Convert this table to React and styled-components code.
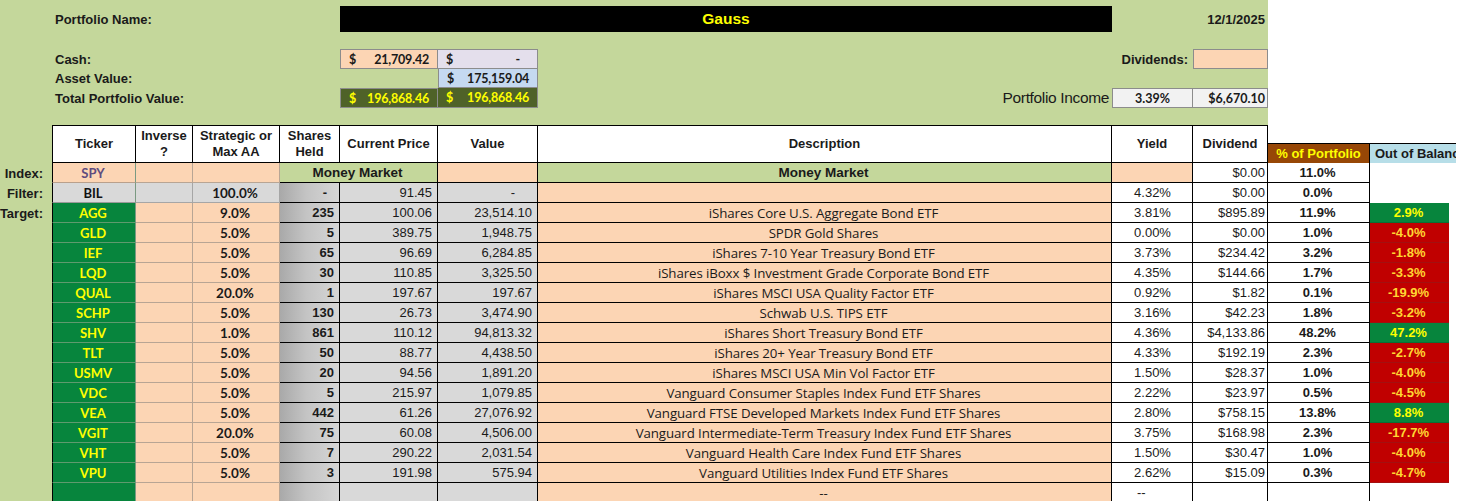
import React from "react";
import styled, { createGlobalStyle } from "styled-components";

const GlobalStyle = createGlobalStyle`
  html, body {
    margin: 0;
    padding: 0;
    background: #ffffff;
    overflow: hidden;
  }
  body {
    font-family: "Liberation Sans", Arial, sans-serif;
    color: #111;
  }
`;

const ARIAL = `"Liberation Sans", Arial, sans-serif`;
const CALIBRI = `Lato, "Open Sans", sans-serif`;
const CALIBRI_TEXT = `"Open Sans", Lato, sans-serif`;

const GREEN_BG = "#c4d79b";
const PEACH = "#fcd5b4";
const TICKER_GREEN = "#07853d";
const GRAY = "#d9d9d9";
const YELLOW = "#ffff00";

const COLS = "52px 84px 57px 87px 60px 98px 100px 574px 81px 75px 102px 86px";

const holdings = [
  { t: "AGG", s: "9.0%", sh: "235", p: "100.06", v: "23,514.10", d: "iShares Core U.S. Aggregate Bond ETF", y: "3.81%", dv: "$895.89", pct: "11.9%", ob: "2.9%" },
  { t: "GLD", s: "5.0%", sh: "5", p: "389.75", v: "1,948.75", d: "SPDR Gold Shares", y: "0.00%", dv: "$0.00", pct: "1.0%", ob: "-4.0%" },
  { t: "IEF", s: "5.0%", sh: "65", p: "96.69", v: "6,284.85", d: "iShares 7-10 Year Treasury Bond ETF", y: "3.73%", dv: "$234.42", pct: "3.2%", ob: "-1.8%" },
  { t: "LQD", s: "5.0%", sh: "30", p: "110.85", v: "3,325.50", d: "iShares iBoxx $ Investment Grade Corporate Bond ETF", y: "4.35%", dv: "$144.66", pct: "1.7%", ob: "-3.3%" },
  { t: "QUAL", s: "20.0%", sh: "1", p: "197.67", v: "197.67", d: "iShares MSCI USA Quality Factor ETF", y: "0.92%", dv: "$1.82", pct: "0.1%", ob: "-19.9%" },
  { t: "SCHP", s: "5.0%", sh: "130", p: "26.73", v: "3,474.90", d: "Schwab U.S. TIPS ETF", y: "3.16%", dv: "$42.23", pct: "1.8%", ob: "-3.2%" },
  { t: "SHV", s: "1.0%", sh: "861", p: "110.12", v: "94,813.32", d: "iShares Short Treasury Bond ETF", y: "4.36%", dv: "$4,133.86", pct: "48.2%", ob: "47.2%" },
  { t: "TLT", s: "5.0%", sh: "50", p: "88.77", v: "4,438.50", d: "iShares 20+ Year Treasury Bond ETF", y: "4.33%", dv: "$192.19", pct: "2.3%", ob: "-2.7%" },
  { t: "USMV", s: "5.0%", sh: "20", p: "94.56", v: "1,891.20", d: "iShares MSCI USA Min Vol Factor ETF", y: "1.50%", dv: "$28.37", pct: "1.0%", ob: "-4.0%" },
  { t: "VDC", s: "5.0%", sh: "5", p: "215.97", v: "1,079.85", d: "Vanguard Consumer Staples Index Fund ETF Shares", y: "2.22%", dv: "$23.97", pct: "0.5%", ob: "-4.5%" },
  { t: "VEA", s: "5.0%", sh: "442", p: "61.26", v: "27,076.92", d: "Vanguard FTSE Developed Markets Index Fund ETF Shares", y: "2.80%", dv: "$758.15", pct: "13.8%", ob: "8.8%" },
  { t: "VGIT", s: "20.0%", sh: "75", p: "60.08", v: "4,506.00", d: "Vanguard Intermediate-Term Treasury Index Fund ETF Shares", y: "3.75%", dv: "$168.98", pct: "2.3%", ob: "-17.7%" },
  { t: "VHT", s: "5.0%", sh: "7", p: "290.22", v: "2,031.54", d: "Vanguard Health Care Index Fund ETF Shares", y: "1.50%", dv: "$30.47", pct: "1.0%", ob: "-4.0%" },
  { t: "VPU", s: "5.0%", sh: "3", p: "191.98", v: "575.94", d: "Vanguard Utilities Index Fund ETF Shares", y: "2.62%", dv: "$15.09", pct: "0.3%", ob: "-4.7%" },
];

const App = () => {
  return (
    <>
      <GlobalStyle />
      <Sheet>
        <TopPanel>
          <TopLabel $row={2}>Portfolio Name:</TopLabel>
          <NameBar>Gauss</NameBar>
          <DateText>12/1/2025</DateText>

          <TopLabel $row={4}>Cash:</TopLabel>
          <MoneyBox $col={6} $row={4} $bg={PEACH}>
            <span>$</span>
            <span>21,709.42</span>
          </MoneyBox>
          <MoneyBox $col={7} $row={4} $bg="#e4dfec" $noLeft>
            <span>$</span>
            <span style={{ paddingRight: 9 }}>-</span>
          </MoneyBox>
          <SideLabel $row={4} $bold>
            Dividends:
          </SideLabel>
          <InputBox $col={10} $row={4} />

          <TopLabel $row={5}>Asset Value:</TopLabel>
          <MoneyBox $col={7} $row={5} $bg="#c5d9f1" $noTop>
            <span>$</span>
            <span>175,159.04</span>
          </MoneyBox>

          <TopLabel $row={6}>Total Portfolio Value:</TopLabel>
          <MoneyBox $col={6} $row={6} $bg="#4f6228" $color={YELLOW}>
            <span>$</span>
            <span>196,868.46</span>
          </MoneyBox>
          <MoneyBox $col={7} $row={6} $bg="#4f6228" $color={YELLOW} $noLeft $noTop>
            <span>$</span>
            <span>196,868.46</span>
          </MoneyBox>
          <SideLabel $row={6} $col={8}>
            Portfolio Income
          </SideLabel>
          <IncomeBox $col={9}>3.39%</IncomeBox>
          <IncomeBox $col={10} $right $noLeft>
            $6,670.10
          </IncomeBox>
        </TopPanel>

        <TableRow $h={38}>
          <RowLabel />
          <HeadCell $first>Ticker</HeadCell>
          <HeadCell>
            Inverse
            <br />?
          </HeadCell>
          <HeadCell>
            Strategic or
            <br />
            Max AA
          </HeadCell>
          <HeadCell>
            Shares
            <br />
            Held
          </HeadCell>
          <HeadCell>Current Price</HeadCell>
          <HeadCell>Value</HeadCell>
          <HeadCell>Description</HeadCell>
          <HeadCell>Yield</HeadCell>
          <HeadCell>Dividend</HeadCell>
          <SideHead>
            <PctHead>% of Portfolio</PctHead>
            <OutHead>Out of Balance</OutHead>
          </SideHead>
        </TableRow>

        <TableRow>
          <RowLabel>Index:</RowLabel>
          <TickerCell $variant="index">SPY</TickerCell>
          <PeachCell />
          <PeachCell />
          <MarketCell $span={2}>Money Market</MarketCell>
          <PeachCell $dark />
          <MarketCell>Money Market</MarketCell>
          <PeachCell $dark />
          <WhiteCell $align="right">$0.00</WhiteCell>
          <PctCell>11.0%</PctCell>
          <OutCell />
        </TableRow>

        <TableRow>
          <RowLabel>Filter:</RowLabel>
          <TickerCell $variant="filter">BIL</TickerCell>
          <GrayCell $soft />
          <GrayCell $soft $cal $bold>
            100.0%
          </GrayCell>
          <SharesCell $pr={12}>-</SharesCell>
          <GrayCell $align="right">91.45</GrayCell>
          <GrayCell $align="right" $pr={22}>
            -
          </GrayCell>
          <DescCell />
          <WhiteCell>4.32%</WhiteCell>
          <WhiteCell $align="right">$0.00</WhiteCell>
          <PctCell>0.0%</PctCell>
          <OutCell />
        </TableRow>

        {holdings.map((h, i) => (
          <TableRow key={h.t}>
            <RowLabel>{i === 0 ? "Target:" : ""}</RowLabel>
            <TickerCell>{h.t}</TickerCell>
            <PeachCell />
            <PeachCell $cal $bold>
              {h.s}
            </PeachCell>
            <SharesCell>{h.sh}</SharesCell>
            <GrayCell $align="right">{h.p}</GrayCell>
            <GrayCell $align="right">{h.v}</GrayCell>
            <DescCell>{h.d}</DescCell>
            <WhiteCell>{h.y}</WhiteCell>
            <WhiteCell $align="right">{h.dv}</WhiteCell>
            <PctCell>{h.pct}</PctCell>
            <OutCell $state={h.ob.startsWith("-") ? "under" : "over"}>{h.ob}</OutCell>
          </TableRow>
        ))}

        <TableRow>
          <RowLabel />
          <TickerCell />
          <PeachCell />
          <PeachCell />
          <SharesCell />
          <GrayCell />
          <GrayCell />
          <DescCell>--</DescCell>
          <WhiteCell $align="left" $pl={25}>
            --
          </WhiteCell>
          <WhiteCell />
          <PctCell />
          <OutCell />
        </TableRow>
      </Sheet>
    </>
  );
};

export default App;

const Sheet = styled.div`
  width: 1461px;
  height: 501px;
  overflow: hidden;
  display: flex;
  flex-direction: column;
`;

const TopPanel = styled.div`
  width: 1268px;
  height: 125px;
  flex-shrink: 0;
  background: ${GREEN_BG};
  display: grid;
  grid-template-columns: 52px 84px 57px 87px 60px 98px 100px 574px 81px 75px;
  grid-template-rows: 6px 26px 17px 20px 19px 20px 17px;
  font-family: ${ARIAL};
  font-size: 13px;
`;

const TopLabel = styled.div`
  grid-column: 2 / 6;
  grid-row: ${(p) => p.$row};
  display: flex;
  align-items: center;
  padding-left: 3px;
  font-weight: 700;
  color: #1a1a1a;
`;

const NameBar = styled.div`
  grid-column: 6 / 9;
  grid-row: 2;
  background: #000;
  color: ${YELLOW};
  font-weight: 700;
  font-size: 15.5px;
  display: flex;
  align-items: center;
  justify-content: center;
`;

const DateText = styled.div`
  grid-column: 9 / 11;
  grid-row: 2;
  display: flex;
  align-items: center;
  justify-content: flex-end;
  padding-right: 3px;
  font-weight: 700;
  color: #1a1a1a;
`;

const SideLabel = styled.div`
  grid-column: ${(p) => p.$col || 9};
  grid-row: ${(p) => p.$row};
  display: flex;
  align-items: center;
  justify-content: flex-end;
  padding-right: ${(p) => (p.$bold ? 5 : 3)}px;
  font-weight: ${(p) => (p.$bold ? 700 : 400)};
  font-size: ${(p) => (p.$bold ? 13 : 15.5)}px;
  letter-spacing: ${(p) => (p.$bold ? 0 : -0.35)}px;
  color: #1a1a1a;
`;

const MoneyBox = styled.div`
  grid-column: ${(p) => p.$col};
  grid-row: ${(p) => p.$row};
  background: ${(p) => p.$bg};
  color: ${(p) => p.$color || "#1a1a1a"};
  border: 1px solid #8c8c8c;
  border-left-width: ${(p) => (p.$noLeft ? 0 : 1)}px;
  border-top-width: ${(p) => (p.$noTop ? 0 : 1)}px;
  display: flex;
  align-items: center;
  justify-content: space-between;
  padding: 0 8px 0 8px;
  font-family: ${CALIBRI};
  font-weight: 700;
  font-size: 12.5px;
  letter-spacing: -0.2px;
`;

const InputBox = styled.div`
  grid-column: ${(p) => p.$col};
  grid-row: ${(p) => p.$row};
  background: ${PEACH};
  border: 1px solid #8c8c8c;
`;

const IncomeBox = styled.div`
  grid-column: ${(p) => p.$col};
  grid-row: 6;
  background: #f2f2f2;
  border: 1px solid #8c8c8c;
  border-left-width: ${(p) => (p.$noLeft ? 0 : 1)}px;
  display: flex;
  align-items: center;
  justify-content: ${(p) => (p.$right ? "flex-end" : "center")};
  padding: 0 2px;
  font-family: ${CALIBRI};
  font-weight: 700;
  font-size: 12.5px;
  color: #1a1a1a;
`;

const TableRow = styled.div`
  display: grid;
  grid-template-columns: ${COLS};
  height: ${(p) => p.$h || 20}px;
  flex-shrink: 0;
`;

const RowLabel = styled.div`
  background: ${GREEN_BG};
  display: flex;
  align-items: center;
  justify-content: flex-end;
  padding-right: 9px;
  font-family: ${ARIAL};
  font-weight: 700;
  font-size: 13px;
  color: #1a1a1a;
  white-space: nowrap;
`;

const HeadCell = styled.div`
  background: #fff;
  border-top: 1px solid #000;
  border-right: 1px solid #000;
  border-bottom: 1px solid #000;
  border-left: ${(p) => (p.$first ? "1px solid #000" : "none")};
  display: flex;
  align-items: center;
  justify-content: center;
  text-align: center;
  line-height: 16px;
  font-family: ${ARIAL};
  font-weight: 700;
  font-size: 13px;
  color: #1a1a1a;
`;

const SideHead = styled.div`
  grid-column: span 2;
  display: grid;
  grid-template-columns: 102px 86px;
  grid-template-rows: 18px 20px;
`;

const PctHead = styled.div`
  grid-row: 2;
  background: #974706;
  color: ${YELLOW};
  border-top: 1px solid #000;
  border-right: 1px solid #000;
  display: flex;
  align-items: center;
  justify-content: center;
  font-family: ${ARIAL};
  font-weight: 700;
  font-size: 13px;
`;

const OutHead = styled.div`
  grid-row: 2;
  background: #b7dee8;
  border-top: 1px solid #000;
  display: flex;
  align-items: center;
  padding-left: 5px;
  font-family: ${ARIAL};
  font-weight: 700;
  font-size: 13px;
  white-space: nowrap;
  overflow: hidden;
  color: #1a1a1a;
`;

const Cell = styled.div`
  grid-column: span ${(p) => p.$span || 1};
  display: flex;
  align-items: center;
  justify-content: ${(p) =>
    p.$align === "right" ? "flex-end" : p.$align === "left" ? "flex-start" : "center"};
  padding: 0 ${(p) => p.$pr ?? 5}px 0 ${(p) => p.$pl ?? 3}px;
  border-right: 1px solid #000;
  border-bottom: 1px solid #000;
  font-family: ${(p) => (p.$cal ? CALIBRI : ARIAL)};
  font-size: 13px;
  font-weight: ${(p) => (p.$bold ? 700 : 400)};
  color: #1a1a1a;
  white-space: nowrap;
  overflow: hidden;
`;

const TickerCell = styled(Cell)`
  border-left: 1px solid #000;
  border-right-color: #7a9a82;
  border-bottom-color: ${(p) => (p.$variant === "filter" ? "#9a9a9a" : p.$variant === "index" ? "#b9a08c" : "#5f9a6e")};
  background: ${(p) =>
    p.$variant === "index" ? PEACH : p.$variant === "filter" ? GRAY : TICKER_GREEN};
  color: ${(p) => (p.$variant === "index" ? "#5f4b7e" : p.$variant === "filter" ? "#111" : YELLOW)};
  font-family: ${CALIBRI};
  font-weight: 700;
  font-size: 13px;
`;

const PeachCell = styled(Cell)`
  background: ${PEACH};
  border-right-color: ${(p) => (p.$dark ? "#000" : "#b8a594")};
  border-bottom-color: ${(p) => (p.$dark ? "#000" : "#b8a594")};
  font-size: 13.5px;
`;

const GrayCell = styled(Cell)`
  background: ${GRAY};
  border-right-color: ${(p) => (p.$soft ? "#a6a6a6" : "#000")};
  border-bottom-color: ${(p) => (p.$soft ? "#a6a6a6" : "#000")};
  font-size: ${(p) => (p.$cal ? "13.5px" : "13px")};
`;

const SharesCell = styled(Cell)`
  justify-content: flex-end;
  background: linear-gradient(to right, #a9a9a9 0%, #c4c4c4 45%, #d6d6d6 100%);
  font-weight: 700;
`;

const MarketCell = styled(Cell)`
  background: ${GREEN_BG};
  font-weight: 700;
  font-size: 13.5px;
`;

const DescCell = styled(Cell)`
  background: ${PEACH};
  font-family: ${CALIBRI_TEXT};
  font-size: 13.3px;
  letter-spacing: -0.1px;
`;

const WhiteCell = styled(Cell)`
  background: #fff;
  padding-right: ${(p) => p.$pr ?? 2}px;
`;

const PctCell = styled(Cell)`
  background: #fff;
  font-weight: 700;
`;

const OutCell = styled(Cell)`
  margin-right: 7px;
  border: none;
  border-bottom: 1px solid
    ${(p) => (p.$state === "under" ? "#a31010" : p.$state === "over" ? "#0a6e34" : "transparent")};
  background: ${(p) =>
    p.$state === "under" ? "#c00000" : p.$state === "over" ? TICKER_GREEN : "transparent"};
  color: ${(p) => (p.$state === "under" ? "#ffd633" : YELLOW)};
  font-weight: 700;
`;
